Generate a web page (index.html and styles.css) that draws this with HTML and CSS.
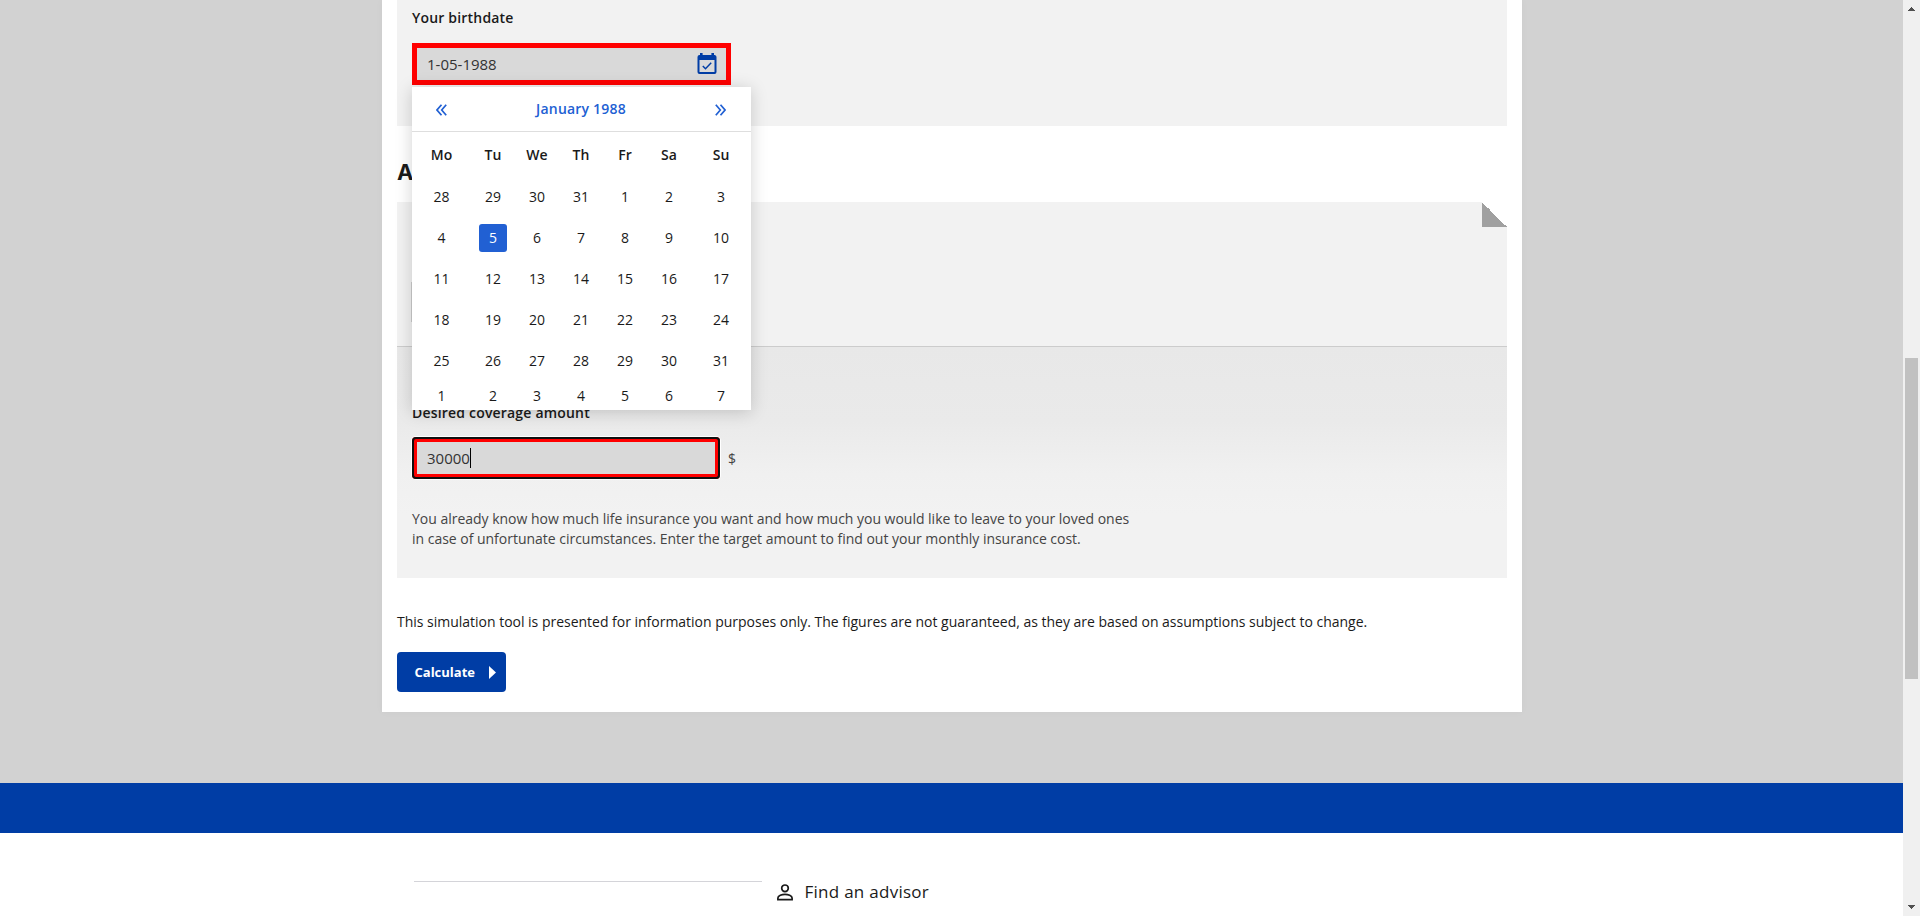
FILE: index.html
```html
<!DOCTYPE html>
<html lang="en">
<head>
<meta charset="utf-8">
<title>Life insurance simulator</title>
<link rel="stylesheet" href="styles.css">
</head>
<body>
<div class="window">
  <div class="page">
    <main class="stage">
      <div class="card">
        <section class="panel birth">
          <div class="label">Your birthdate</div>
          <div class="date-field">
            <span class="value">1-05-1988</span>
            <svg class="cal-icon" width="20" height="22" viewBox="0 0 20 22"><path fill="#003da5" fill-rule="evenodd" d="M3 0h2.6v2h8.800V0H17v2h.8A2 2 0 0 1 19.500 4v15a2 2 0 0 1-2 2H2.500a2 2 0 0 1-2-2V4a2 2 0 0 1 2-2H3zM2.500 7v12h15V7z"/><path fill="none" stroke="#003da5" stroke-width="1.500" d="M5.800 13l2.700 2.700 5.700-5.900"/></svg>
            <div class="calendar">
              <div class="cal-head">
                <svg width="11" height="12" viewBox="0 0 11 12"><path d="M5.500.7L1 6l4.500 5.300M10.200.7L5.700 6l4.500 5.300"/></svg>
                <span>January 1988</span>
                <svg width="11" height="12" viewBox="0 0 11 12"><path d="M5.500.7L10 6l-4.500 5.300M.8.7L5.300 6 .8 11.300"/></svg>
              </div>
              <div class="days">
                <b>Mo</b><b>Tu</b><b>We</b><b>Th</b><b>Fr</b><b>Sa</b><b>Su</b>
                <span>28</span><span>29</span><span>30</span><span>31</span><span>1</span><span>2</span><span>3</span>
                <span>4</span><span class="selected">5</span><span>6</span><span>7</span><span>8</span><span>9</span><span>10</span>
                <span>11</span><span>12</span><span>13</span><span>14</span><span>15</span><span>16</span><span>17</span>
                <span>18</span><span>19</span><span>20</span><span>21</span><span>22</span><span>23</span><span>24</span>
                <span>25</span><span>26</span><span>27</span><span>28</span><span>29</span><span>30</span><span>31</span>
                <span>1</span><span>2</span><span>3</span><span>4</span><span>5</span><span>6</span><span>7</span>
              </div>
            </div>
          </div>
        </section>
        <h2>A</h2>
        <section class="panel">
          <div class="need"><div class="fold"></div><div class="choice"></div></div>
          <div class="coverage">
            <div class="label">Desired coverage amount</div>
            <div class="amount-row">
              <div class="amount"><span class="value">30000</span><i class="caret"></i></div>
              <span>$</span>
            </div>
            <p class="help">You already know how much life insurance you want and how much you would like to leave to your loved ones<br>in case of unfortunate circumstances. Enter the target amount to find out your monthly insurance cost.</p>
          </div>
        </section>
        <p class="notice">This simulation tool is presented for information purposes only. The figures are not guaranteed, as they are based on assumptions subject to change.</p>
        <button class="calculate">Calculate<svg width="7" height="13" viewBox="0 0 7 13"><path fill="#fff" d="M0 0l7 6.500L0 13z"/></svg></button>
      </div>
    </main>
    <div class="band"></div>
    <footer class="footer">
      <div class="rule"></div>
      <div class="advisor">
        <svg width="16" height="17" viewBox="0 0 16 17"><g fill="none" stroke="#1a1a1a" stroke-width="1.700"><circle cx="8" cy="4.300" r="3.300"/><path d="M.9 15.600v-1.700C.9 11.500 5 10.300 8 10.300s7.100 1.200 7.100 3.600v1.700z"/></g></svg>
        <span>Find an advisor</span>
      </div>
    </footer>
  </div>
  <div class="scrollbar">
    <svg width="7" height="4" viewBox="0 0 7 4"><path fill="#505050" d="M3 0h1v1h1v1h1v1h1v1H0V3h1V2h1V1h1z"/></svg>
    <div class="thumb"></div>
    <svg width="7" height="4" viewBox="0 0 7 4"><path fill="#505050" d="M0 0h7v1H6v1H5v1H4v1H3V3H2V2H1V1H0z"/></svg>
  </div>
</div>
</body>
</html>
```
FILE: styles.css
```css
* { box-sizing: border-box; }
body { margin: 0; font: 14px/20px "Open Sans", sans-serif; color: #1a1a1a; overflow: hidden; }
.window { display: flex; height: 916px; }
.page { flex: 1; background: #fff; overflow: hidden; }
.stage { height: 783px; background: #d2d2d2; padding-bottom: 71px; }
.card { width: 1140px; height: 712px; margin-left: 382px; padding: 0 15px; background: #fff; box-shadow: 0 0 8px rgba(0,0,0,.03); }
.panel { background: #f2f2f2; }
.label { font-weight: 600; line-height: 20px; letter-spacing: .19px; }
.value { font-size: 15px; color: #333; }
.birth { height: 126px; padding: 8px 15px 0; }
.date-field { position: relative; z-index: 2; display: flex; align-items: center; justify-content: space-between; width: 319px; height: 42px; margin-top: 15px; padding: 0 9px 0 10px; border: 5px solid #f00; background: #d9d9d9; }
.cal-icon { margin-bottom: 1px; }
.calendar { position: absolute; left: -5px; top: 39px; width: 339px; height: 323px; background: #fff; box-shadow: 0 2px 16px rgba(0,0,0,.18); }
.cal-head { display: flex; justify-content: space-between; align-items: center; height: 45px; padding: 0 25px 0 24px; border-bottom: 1px solid #dedede; font-weight: 600; letter-spacing: .2px; color: #2160d3; }
.cal-head svg { margin-top: 2px; fill: none; stroke: #2160d3; stroke-width: 1.7; }
.days { display: grid; grid-template-columns: 59px repeat(5, 44px) 60px; grid-template-rows: 45px 40px 41px 41px 41px 41px 29px; align-items: center; justify-items: center; }
.days b { font-weight: 600; }
.selected { width: 28px; height: 28px; border-radius: 3px; background: #2160d3; color: #fff; text-align: center; line-height: 28px; }
h2 { margin: 0; height: 76px; padding-top: 30px; font: 700 22px/32px Inter, sans-serif; }
.need { height: 145px; border-bottom: 1px solid #ccc; }
.fold { float: right; width: 25px; height: 25px; background: linear-gradient(to top right, #a0a0a0 50%, #fff 50%); }
.choice { width: 300px; height: 120px; margin-left: 14px; background: linear-gradient(#ccc, #ccc) 0 80px / 1px 40px no-repeat; }
.coverage { height: 231px; padding: 56px 15px 0; background: #f2f2f2 linear-gradient(#e8e8e8, #eaeaea 32%, #f0f0f0 55%, #f2f2f2 72%); }
.amount-row { display: flex; align-items: center; gap: 8px; margin-top: 14px; }
.amount-row > span { padding-top: 1px; color: #444; }
.amount { display: flex; align-items: center; width: 308px; height: 42px; padding-left: 15px; border-radius: 4px; background: #d9d9d9; box-shadow: inset 0 0 0 2px #101010, inset 0 0 0 5px #f00, 0 0 0 1px #fff; }
.caret { width: 1px; height: 20px; background: #000; }
.help { margin: 30px 0 0; color: #444; letter-spacing: -.018px; }
.notice { margin: 34px 0 20px; letter-spacing: -.014px; }
.calculate { display: flex; align-items: center; justify-content: space-between; width: 109px; height: 40px; padding: 0 10px 0 17.5px; border: 0; border-radius: 4px; background: #003da5; color: #fff; font: 700 13px "Open Sans", sans-serif; }
.band { height: 50px; background: #003da5; }
.footer { display: flex; padding: 47px 0 0 414px; }
.rule { width: 348px; height: 1px; margin-top: 1px; background: #d4d4d9; }
.advisor { display: flex; align-items: center; gap: 12px; margin-left: 14.5px; height: 24px; font: 500 17px/24px "Open Sans", sans-serif; letter-spacing: .27px; }
.scrollbar { display: flex; flex-direction: column; align-items: center; width: 17px; padding-top: 7px; background: #f0f0f0; }
.thumb { width: 13px; height: 321px; margin: 347px 0 226px; background: #c1c1c1; }
.scrollbar svg { display: block; flex: none; }
```
